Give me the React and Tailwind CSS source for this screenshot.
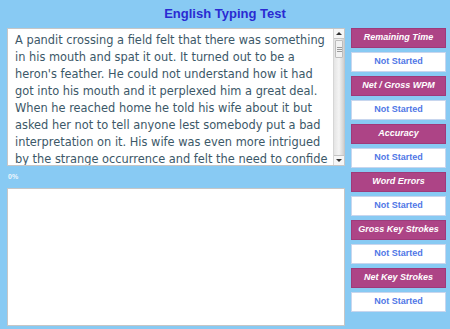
import React from "react";

const passage =
  "A pandit crossing a field felt that there was something in his mouth and spat it out. It turned out to be a heron's feather. He could not understand how it had got into his mouth and it perplexed him a great deal. When he reached home he told his wife about it but asked her not to tell anyone lest somebody put a bad interpretation on it. His wife was even more intrigued by the strange occurrence and felt the need to confide";

const stats = [
  "Remaining Time",
  "Net / Gross WPM",
  "Accuracy",
  "Word Errors",
  "Gross Key Strokes",
  "Net Key Strokes",
];

function Scrollbar() {
  return (
    <div className="flex w-[11px] shrink-0 flex-col border-l border-[#d6d6d6] bg-gradient-to-r from-[#e4e4e4] via-[#f4f4f4] to-[#cfcfcf]">
      <div className="flex h-[10px] items-center justify-center border-b border-[#c4c4c4] bg-[#f6f6f6]">
        <div className="h-0 w-0 border-x-[3px] border-b-[3px] border-x-transparent border-b-[#333]" />
      </div>
      <div className="mx-[1px] mt-[1px] flex h-[18px] flex-col items-center justify-center gap-[1px] rounded-[1px] border border-[#bdbdbd] bg-[#f2f2f2]">
        <div className="h-px w-[5px] bg-[#9a9a9a]" />
        <div className="h-px w-[5px] bg-[#9a9a9a]" />
        <div className="h-px w-[5px] bg-[#9a9a9a]" />
      </div>
      <div className="flex-1" />
      <div className="flex h-[10px] items-center justify-center border-t border-[#c4c4c4] bg-[#f6f6f6]">
        <div className="h-0 w-0 border-x-[3px] border-t-[3px] border-x-transparent border-t-[#333]" />
      </div>
    </div>
  );
}

function StatBox({ label }) {
  return (
    <div className="flex flex-col gap-[4px]">
      <div className="flex h-[20px] items-center justify-center border border-[#9e3a7a] bg-[#ad4486] font-['Liberation_Sans',Arial,sans-serif] text-[9px] font-bold italic text-white">
        {label}
      </div>
      <div className="flex h-[20px] items-center justify-center border border-[#c8d6ee] bg-white font-['Liberation_Sans',Arial,sans-serif] text-[9px] font-bold text-[#5077e6]">
        Not Started
      </div>
    </div>
  );
}

export default function App() {
  return (
    <div className="h-[329px] w-[450px] overflow-hidden bg-[#88caf3]">
      <h1 className="flex h-[28px] items-center justify-center pb-[1px] font-['Liberation_Sans',Arial,sans-serif] text-[13px] font-bold text-[#2a2ad2]">
        English Typing Test
      </h1>
      <div className="flex gap-[6px] pl-[7px] pr-[4px]">
        <div className="flex w-[338px] flex-col">
          <div className="flex h-[138px] overflow-hidden border border-[#c6c6c6] bg-white">
            <p className="flex-1 pl-[7px] pt-[3px] font-['DejaVu_Sans',Verdana,sans-serif] text-[11.4px] leading-[17px] text-[#3c5868]">
              {passage}
            </p>
            <Scrollbar />
          </div>
          <div className="flex h-[22px] items-center pl-[1px] font-['Liberation_Sans',Arial,sans-serif] text-[7px] font-bold text-[#eef6fc]">
            0%
          </div>
          <div className="h-[138px] border border-[#c6c6c6] bg-white" />
        </div>
        <div className="flex w-[95px] flex-col gap-[4px]">
          {stats.map((s) => (
            <StatBox key={s} label={s} />
          ))}
        </div>
      </div>
    </div>
  );
}
